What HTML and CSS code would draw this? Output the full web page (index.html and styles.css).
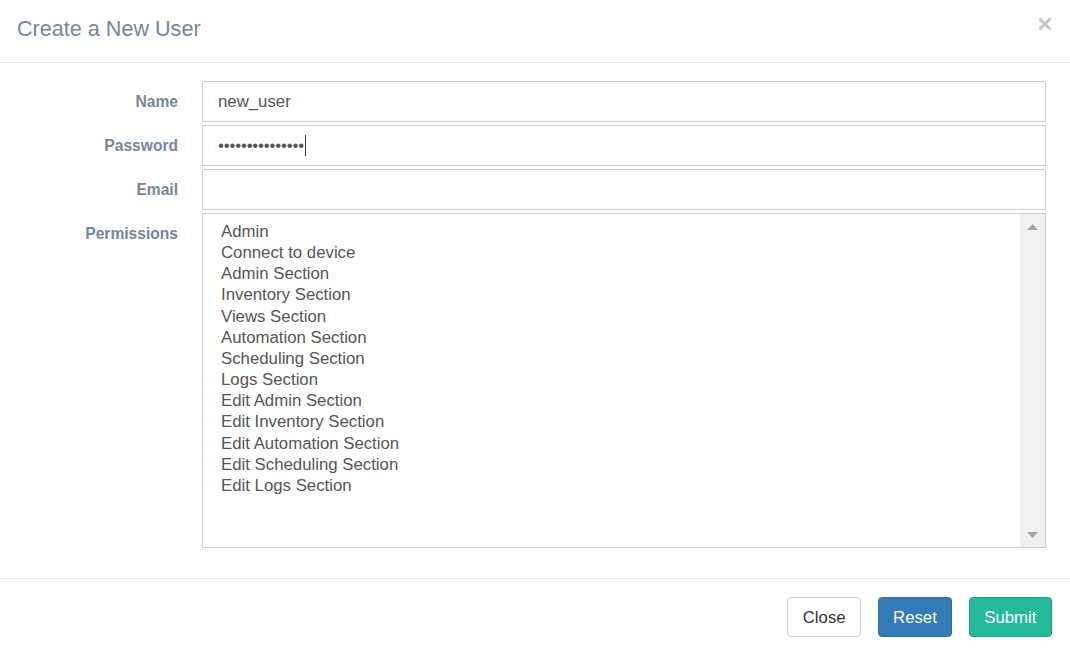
FILE: index.html
```html
<!DOCTYPE html>
<html lang="en">
<head>
<meta charset="utf-8">
<title>Create a New User</title>
<link rel="stylesheet" href="styles.css">
</head>
<body>
<div class="modal">
  <div class="modal-header">
    <h4 class="modal-title">Create a New User</h4>
    <button class="close" type="button" aria-label="Close">
      <svg width="12" height="12" viewBox="0 0 12 12"><path d="M1.5 1.5 L10.5 10.5 M10.5 1.5 L1.5 10.5" stroke="#c4c4c4" stroke-width="3" stroke-linecap="square" fill="none"/></svg>
    </button>
  </div>
  <div class="modal-body">
    <form class="form-grid">
      <label class="form-label" for="name">Name</label>
      <input class="form-control" id="name" type="text" value="new_user">

      <label class="form-label" for="password">Password</label>
      <div class="form-control pw" id="password" role="textbox">•••••••••••••••<span class="caret"></span></div>

      <label class="form-label" for="email">Email</label>
      <input class="form-control" id="email" type="text" value="">

      <label class="form-label">Permissions</label>
      <div class="listbox" role="listbox">
        <ul class="options">
          <li>Admin</li>
          <li>Connect to device</li>
          <li>Admin Section</li>
          <li>Inventory Section</li>
          <li>Views Section</li>
          <li>Automation Section</li>
          <li>Scheduling Section</li>
          <li>Logs Section</li>
          <li>Edit Admin Section</li>
          <li>Edit Inventory Section</li>
          <li>Edit Automation Section</li>
          <li>Edit Scheduling Section</li>
          <li>Edit Logs Section</li>
        </ul>
        <div class="scrollbar">
          <span class="arrow"><svg width="11" height="6" viewBox="0 0 11 6"><path d="M0 6 L5.5 0 L11 6 Z" fill="#a3a3a3"/></svg></span>
          <span class="arrow"><svg width="11" height="6" viewBox="0 0 11 6"><path d="M0 0 L11 0 L5.5 6 Z" fill="#a3a3a3"/></svg></span>
        </div>
      </div>
    </form>
  </div>
  <div class="modal-footer">
    <button class="btn btn-default" type="button">Close</button>
    <button class="btn btn-primary" type="button">Reset</button>
    <button class="btn btn-success" type="button">Submit</button>
  </div>
</div>
</body>
</html>
```
FILE: styles.css
```css
* { box-sizing: border-box; }
html, body { margin: 0; padding: 0; background: #fff; }
body {
  font-family: "Liberation Sans", Arial, sans-serif;
  font-size: 16.8px;
  color: #555;
}
.modal { width: 1070px; height: 655px; display: flex; flex-direction: column; }
.modal-header {
  height: 63px;
  border-bottom: 1px solid #e5e5e5;
  display: flex;
  justify-content: space-between;
  align-items: flex-start;
  padding: 0 19px 0 17px;
}
.modal-title {
  margin: 0;
  padding-top: 16px;
  font-size: 21.6px;
  line-height: 26px;
  font-weight: normal;
  color: #73879c;
}
.close {
  margin-top: 18px;
  padding: 0;
  border: 0;
  background: none;
  width: 12px;
  height: 12px;
  display: block;
  cursor: pointer;
}
.close svg { display: block; }
.modal-body { padding: 18px 24px 30px 0; }
.form-grid {
  margin: 0;
  display: grid;
  grid-template-columns: 178px 1fr;
  column-gap: 24px;
  row-gap: 3px;
}
.form-label {
  text-align: right;
  font-weight: bold;
  font-size: 15.6px;
  line-height: 22px;
  padding-top: 10px;
  color: #73879c;
}
.form-control {
  height: 41px;
  width: 100%;
  border: 1px solid #ccc;
  border-radius: 0;
  padding: 0 15px;
  font-family: inherit;
  font-size: 16.8px;
  color: #555;
  background: #fff;
  outline: none;
}
.pw {
  display: flex;
  align-items: center;
  letter-spacing: -0.15px;
}
.caret {
  display: inline-block;
  width: 1px;
  height: 21px;
  background: #333;
  margin-left: 1px;
}
.listbox {
  height: 335px;
  border: 1px solid #ccc;
  display: flex;
}
.options {
  flex: 1;
  list-style: none;
  margin: 0;
  padding: 7px 0 0 18px;
  line-height: 21.15px;
  font-size: 16.8px;
  color: #555;
}
.scrollbar {
  width: 25px;
  background: #f0f0f0;
  display: flex;
  flex-direction: column;
  justify-content: space-between;
}
.arrow {
  height: 25px;
  display: flex;
  align-items: center;
  justify-content: center;
}
.arrow svg { display: block; }
.modal-footer {
  border-top: 1px solid #e5e5e5;
  padding: 18px 18px 18px 0;
  display: flex;
  justify-content: flex-end;
  gap: 16.4px;
}
.btn {
  height: 40px;
  padding: 1px 14.5px 0;
  font-family: inherit;
  font-size: 16.8px;
  line-height: 24px;
  border: 1px solid transparent;
  border-radius: 4px;
  cursor: pointer;
}
.btn-default { background: #fff; border-color: #ccc; color: #333; }
.btn-primary { background: #337ab7; border-color: #2e6da4; color: #fff; }
.btn-success { background: #26b99a; border-color: #169f85; color: #fff; }
```
